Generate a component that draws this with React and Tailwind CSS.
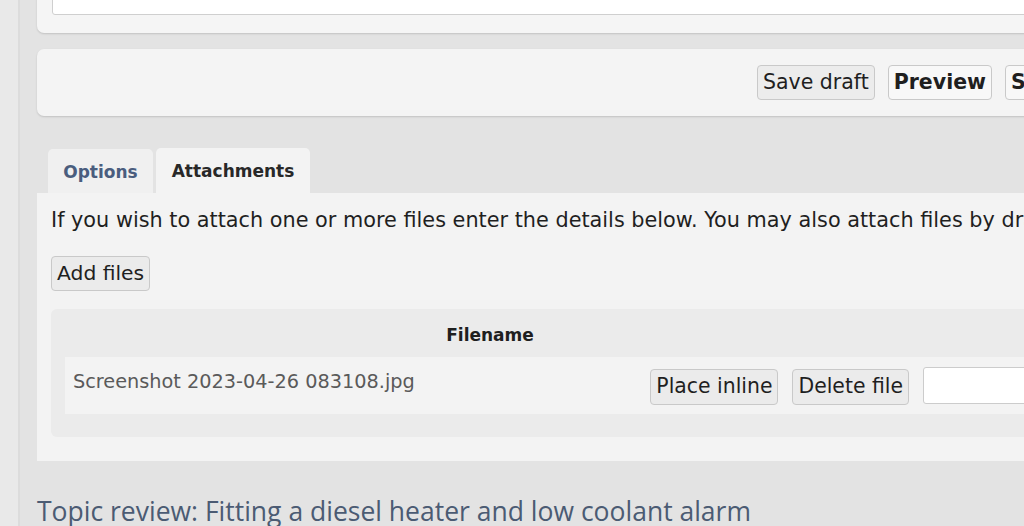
export default function App() {
  const body = { fontFamily: '"DejaVu Sans", Verdana, sans-serif' };

  return (
    <div className="flex h-[526px] w-[1024px] items-start overflow-hidden bg-[#e3e3e3] text-[#1f1f1f]" style={body}>
      <div className="h-full w-[20px] shrink-0 border-r-2 border-[#dcdcdc] bg-[#e9e9e9]" />
      <div className="flex w-[1180px] shrink-0 flex-col pl-[17px]">
        {/* editor panel, cut off at the top */}
        <div className="-mt-[20px] h-[53px] shrink-0 rounded-b-[7px] bg-[#f5f5f5] px-[15px] shadow-[0_1px_2px_rgba(0,0,0,0.15)]">
          <div className="h-[35px] rounded-b-[3px] border border-[#cfcfcf] bg-white" />
        </div>

        {/* submit buttons */}
        <div className="mt-[16px] flex h-[67px] shrink-0 items-center gap-[13px] rounded-[7px] bg-[#f4f4f4] pl-[720px] shadow-[0_1px_2px_rgba(0,0,0,0.15)]">
          <button className="h-[35px] shrink-0 rounded-[4px] border border-[#c9c9c9] bg-[#ececec] px-[5px] text-[20.5px]">
            Save draft
          </button>
          <button className="h-[35px] shrink-0 rounded-[4px] border border-[#c9c9c9] bg-[#f8f8f8] px-[5px] text-[20.5px] font-bold">
            Preview
          </button>
          <button className="h-[35px] w-[110px] shrink-0 rounded-[4px] border border-[#c9c9c9] bg-[#f8f8f8] px-[5px] text-left text-[20.5px] font-bold">
            Submit
          </button>
        </div>

        {/* tabs */}
        <div className="mt-[32px] flex shrink-0 items-end gap-[3px] pl-[11px]">
          <div className="flex h-[44px] w-[105px] items-center justify-center rounded-t-[5px] bg-[#f0f0f0] pt-[4px] text-[17px] font-bold text-[#4a5d7e]">
            Options
          </div>
          <div className="flex h-[45px] w-[154px] items-center justify-center rounded-t-[5px] bg-[#f3f3f3] pt-[2px] text-[17px] font-bold text-[#282828]">
            Attachments
          </div>
        </div>

        {/* attachments panel */}
        <div className="h-[268px] shrink-0 bg-[#f3f3f3] px-[14px] pt-[13px]">
          <p className="whitespace-nowrap text-[20.8px] leading-[28px]">
            If you wish to attach one or more files enter the details below. You may also attach files by dragging and dropping them in the message box.
          </p>
          <button className="mt-[22px] h-[35px] rounded-[4px] border border-[#c9c9c9] bg-[#ebebeb] px-[5px] text-[20.3px]">
            Add files
          </button>

          <div className="mt-[18px] h-[128px] rounded-[6px] bg-[#ebebeb] px-[14px]">
            <div className="flex h-[48px] items-center">
              <div className="w-[850px] pt-[6px] text-center text-[17px] font-bold">Filename</div>
            </div>
            <div className="flex h-[57px] items-center bg-[#f3f3f3]">
              <div className="flex w-[850px] items-center justify-between pl-[8px] pr-[6px]">
                <span className="pb-[6px] text-[19.3px] text-[#5a5a5a]">Screenshot 2023-04-26 083108.jpg</span>
                <div className="flex gap-[14px] pt-[2px]">
                  <button className="h-[36px] rounded-[4px] border border-[#c9c9c9] bg-[#ebebeb] px-[5px] text-[20.4px]">
                    Place inline
                  </button>
                  <button className="h-[36px] rounded-[4px] border border-[#c9c9c9] bg-[#ebebeb] px-[5px] text-[20.4px]">
                    Delete file
                  </button>
                </div>
              </div>
              <div className="ml-[8px] h-[37px] w-[200px] rounded-[3px] border border-[#cccccc] bg-white" />
            </div>
          </div>
        </div>

        <h2
          className="mt-[32px] shrink-0 text-[26.5px] leading-[36px] text-[#4b5b73]"
          style={{ fontFamily: '"Open Sans", "Noto Sans", sans-serif' }}
        >
          Topic review: Fitting a diesel heater and low coolant alarm
        </h2>
      </div>
    </div>
  );
}
